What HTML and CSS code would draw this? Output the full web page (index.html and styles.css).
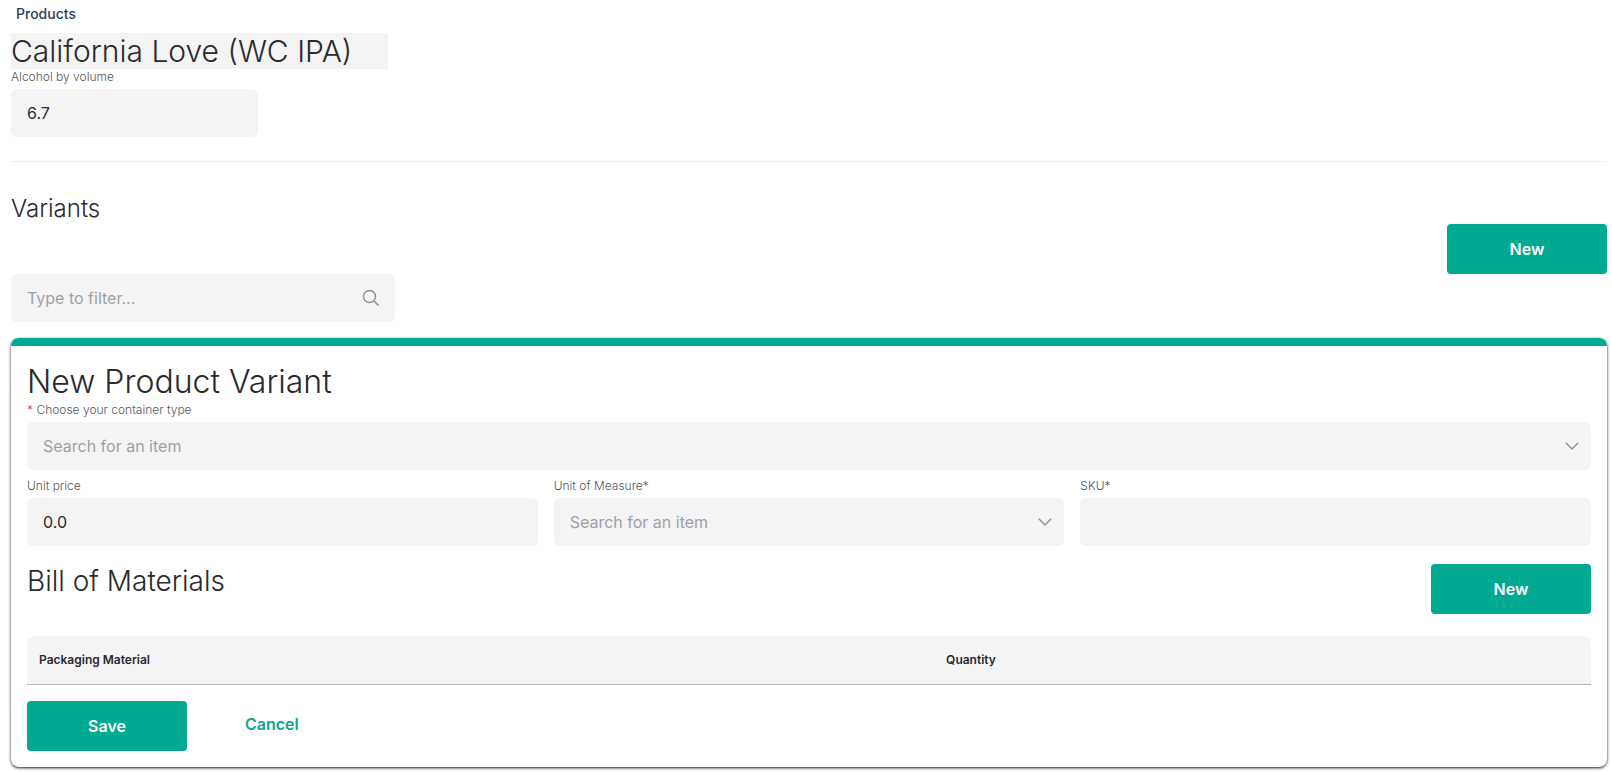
FILE: index.html
```html
<!DOCTYPE html>
<html lang="en">
<head>
  <meta charset="utf-8">
  <meta name="viewport" content="width=device-width, initial-scale=1.0">
  <title>California Love (WC IPA)</title>
  <link rel="stylesheet" href="styles.css">
</head>
<body>
  <main class="page">
    <nav class="breadcrumb">
      <a href="#products">Products</a>
    </nav>

    <!-- Product details -->
    <input class="product-name" type="text" aria-label="Product name" value="California Love (WC IPA)">
    <div class="field field-abv">
      <label for="abv">Alcohol by volume</label>
      <input class="control" type="text" id="abv" value="6.7">
    </div>

    <hr class="divider">

    <!-- Variants -->
    <h2 class="section-title">Variants</h2>
    <div class="toolbar">
      <button class="btn" type="button">New</button>
    </div>
    <div class="control-wrap filter">
      <input class="control" type="text" id="filter" aria-label="Filter variants" placeholder="Type to filter...">
      <svg class="icon" viewBox="0 0 18 18" aria-hidden="true">
        <circle cx="7.5" cy="7.5" r="6"/>
        <path d="M11.8 11.8L16.6 16.6"/>
      </svg>
    </div>

    <!-- New variant form -->
    <form class="card">
      <h1 class="card-title">New Product Variant</h1>
      <div class="field">
        <label for="container"><span class="required">*</span> Choose your container type</label>
        <div class="control-wrap">
          <select class="control placeholder" id="container">
            <option>Search for an item</option>
          </select>
          <svg class="icon chevron" viewBox="0 0 18 18" aria-hidden="true">
            <path d="M2.8 5.8L9 12L15.2 5.8"/>
          </svg>
        </div>
      </div>

      <div class="field-row">
        <div class="field">
          <label for="price">Unit price</label>
          <input class="control" type="text" id="price" value="0.0">
        </div>
        <div class="field">
          <label for="uom">Unit of Measure*</label>
          <div class="control-wrap">
            <select class="control placeholder" id="uom">
              <option>Search for an item</option>
            </select>
            <svg class="icon chevron" viewBox="0 0 18 18" aria-hidden="true">
              <path d="M2.8 5.8L9 12L15.2 5.8"/>
            </svg>
          </div>
        </div>
        <div class="field">
          <label for="sku">SKU*</label>
          <input class="control" type="text" id="sku">
        </div>
      </div>

      <!-- Bill of materials -->
      <div class="materials-header">
        <h2 class="materials-title">Bill of Materials</h2>
        <button class="btn" type="button">New</button>
      </div>
      <table class="materials">
        <thead>
          <tr>
            <th class="col-material" scope="col">Packaging Material</th>
            <th scope="col">Quantity</th>
          </tr>
        </thead>
      </table>

      <div class="actions">
        <button class="btn" type="submit">Save</button>
        <button class="btn-link" type="button">Cancel</button>
      </div>
    </form>
  </main>
</body>
</html>
```
FILE: styles.css
```css
* {
  box-sizing: border-box;
}

body {
  margin: 0;
  font-family: Inter, "Liberation Sans", sans-serif;
  font-size: 16px;
  color: #292a2e;
  background-color: #fff;
}

h1,
h2 {
  margin: 0;
  font-weight: 300;
}

input,
select,
button {
  font-family: inherit;
  font-size: 16px;
}

.page {
  padding: 5px 5px 5px 11px;
}

.breadcrumb {
  padding-left: 5px;
  margin-bottom: 10px;
  line-height: 18px;
}

.breadcrumb a {
  display: block;
  font-size: 14px;
  font-weight: 500;
  color: #2c4053;
  text-decoration: none;
}

.product-name {
  display: block;
  width: 377px;
  max-width: 100%;
  height: 36px;
  padding: 0;
  border: none;
  background-color: #f4f4f4;
  color: #292a2e;
  font-size: 30px;
  font-weight: 300;
}

/* Form fields */
.field label {
  display: block;
  margin-bottom: 4px;
  color: #55565a;
  font-size: 12px;
  font-weight: 300;
  line-height: 16px;
}

.field-abv {
  max-width: 247px;
}

.field .required {
  color: #d9302c;
}

.control {
  display: block;
  width: 100%;
  height: 48px;
  padding: 0 16px;
  border: none;
  border-radius: 6px;
  background-color: #f4f4f4;
  color: #292a2e;
  appearance: none;
}

.control::placeholder,
.control.placeholder {
  color: #9ea1a9;
  opacity: 1;
}

.control-wrap {
  position: relative;
}

.icon {
  position: absolute;
  top: 15px;
  right: 15px;
  width: 18px;
  height: 18px;
  fill: none;
  stroke: #929292;
  stroke-width: 1.5;
  pointer-events: none;
}

.icon.chevron {
  right: 10px;
}

.divider {
  height: 1px;
  margin: 24px 0 30px;
  border: none;
  background-color: #eee;
}

.section-title {
  padding-top: 2px;
  font-size: 24px;
  line-height: 30px;
}

.toolbar {
  display: flex;
  justify-content: flex-end;
}

.filter {
  max-width: 384px;
}

/* Buttons */
.btn {
  width: 160px;
  height: 50px;
  border: none;
  border-radius: 4px;
  background-color: #00a991;
  color: #fff;
  font-weight: 600;
  cursor: pointer;
}

.btn-link {
  height: 46px;
  padding: 0;
  border: none;
  background: none;
  color: #12a48e;
  font-weight: 600;
  cursor: pointer;
}

/* New variant card */
.card {
  margin-top: 16px;
  padding: 16px;
  border-top: 8px solid #00a991;
  border-radius: 8px;
  box-shadow: 0 1px 3px rgba(0, 0, 0, 0.9);
}

.card-title {
  font-size: 32px;
  line-height: 40px;
}

.field-row {
  display: grid;
  grid-template-columns: repeat(3, 1fr);
  gap: 16px;
  margin-top: 8px;
}

.materials-header {
  display: flex;
  justify-content: space-between;
  align-items: flex-start;
  margin: 18px 0 22px;
}

.materials-title {
  font-size: 28px;
  line-height: 34px;
}

.materials {
  width: 100%;
  border-spacing: 0;
  table-layout: fixed;
}

.materials th {
  height: 49px;
  padding: 0 12px 2px;
  border-bottom: 1px solid #b5b5b5;
  background-color: #f4f4f4;
  font-size: 12px;
  font-weight: 600;
  text-align: left;
}

.materials th:first-child {
  border-top-left-radius: 8px;
}

.materials th:last-child {
  border-top-right-radius: 8px;
}

.materials .col-material {
  width: 58%;
}

.actions {
  display: flex;
  align-items: flex-start;
  gap: 58px;
  margin-top: 16px;
}
```
